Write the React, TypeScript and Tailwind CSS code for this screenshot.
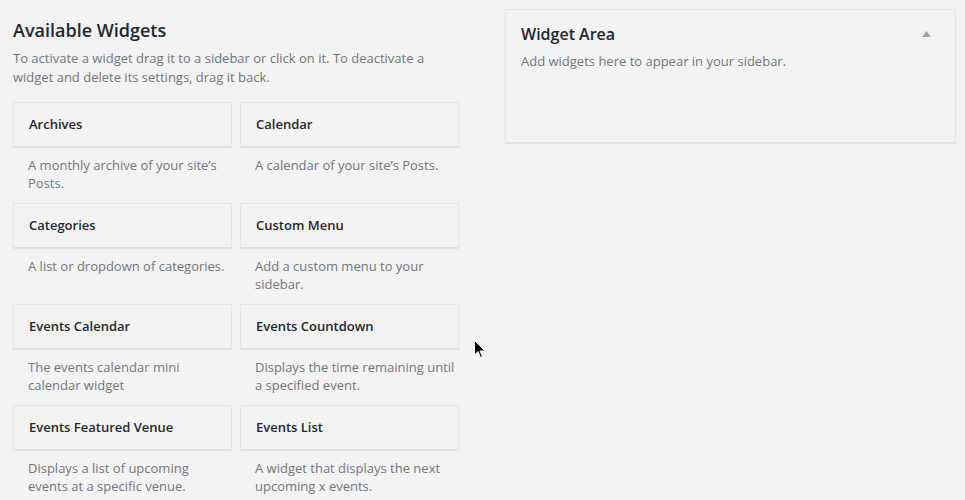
import React from 'react';

const widgets = [
  { title: 'Archives', desc: 'A monthly archive of your site’s Posts.' },
  { title: 'Calendar', desc: 'A calendar of your site’s Posts.' },
  { title: 'Categories', desc: 'A list or dropdown of categories.' },
  { title: 'Custom Menu', desc: 'Add a custom menu to your sidebar.' },
  { title: 'Events Calendar', desc: 'The events calendar mini calendar widget' },
  { title: 'Events Countdown', desc: 'Displays the time remaining until a specified event.' },
  { title: 'Events Featured Venue', desc: 'Displays a list of upcoming events at a specific venue.' },
  { title: 'Events List', desc: 'A widget that displays the next upcoming x events.' },
];

const App = () => {
  return (
    <div
      className="relative w-[965px] h-[500px] overflow-hidden bg-[#f3f3f3] flex"
      style={{ fontFamily: '"Open Sans", "Noto Sans", sans-serif' }}
    >
      {/* available widgets */}
      <div className="ml-[13px] w-[446px]">
        <h2 className="mt-[18px] text-[18px] leading-[24px] font-semibold text-[#23282d]">
          Available Widgets
        </h2>
        <p className="mt-[7px] text-[13px] leading-[19px] text-[#72777c]">
          To activate a widget drag it to a sidebar or click on it. To deactivate a widget and delete its settings, drag it back.
        </p>
        <div className="mt-[15px] grid grid-cols-2 gap-x-[8px]">
          {widgets.map(w => (
            <div key={w.title}>
              <div className="h-[45px] border border-[#e5e5e5] border-b-[#e0e0e0] shadow-[0_1px_1px_rgba(0,0,0,0.05)] bg-[#f3f3f3] px-[15px] flex items-center">
                <h3 className="text-[13px] font-semibold text-[#23282d]">{w.title}</h3>
              </div>
              <p className="pl-[15px] pr-[4px] pt-[9px] pb-[11px] text-[13px] leading-[18px] text-[#72777c]">
                {w.desc}
              </p>
            </div>
          ))}
        </div>
      </div>

      {/* sidebar */}
      <div className="ml-[46px] mt-[9px] w-[451px]">
        <div className="h-[134px] border border-[#e5e5e5] border-b-[#e0e0e0] shadow-[0_1px_1px_rgba(0,0,0,0.06)] bg-[#f3f3f3] px-[15px]">
          <div className="flex items-center justify-between pt-[12px]">
            <h2 className="text-[16px] leading-[24px] font-semibold text-[#23282d]">Widget Area</h2>
            <svg width="9" height="6" viewBox="0 0 9 6" className="mr-[9px]">
              <path d="M4.5 0 L9 6 L0 6 Z" fill="#a0a5aa" />
            </svg>
          </div>
          <p className="mt-[6px] text-[13px] leading-[19px] text-[#72777c]">
            Add widgets here to appear in your sidebar.
          </p>
        </div>
      </div>

      {/* mouse cursor */}
      <svg
        className="absolute left-[474px] top-[340px]"
        width="12"
        height="19"
        viewBox="0 0 12 19"
      >
        <path d="M0.5 0.5 L0.5 15 L4 11.5 L6.5 17.5 L8.5 16.5 L6 11 L11 11 Z" fill="#000" stroke="#fff" strokeWidth="1" />
      </svg>
    </div>
  );
};

export default App;
